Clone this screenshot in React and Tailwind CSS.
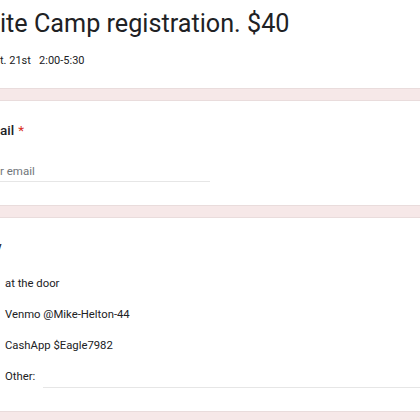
export default function App() {
  const options = ["at the door", "Venmo @Mike-Helton-44", "CashApp $Eagle7982"];
  return (
    <div className="w-[420px] h-[420px] overflow-hidden bg-[#f6e8e8] text-[#202124]" style={{ fontFamily: "Roboto, 'Liberation Sans', sans-serif" }}>
      <div className="h-[89px] bg-white border-b border-[#e9dcdc] pt-[7px]">
        <div className="text-[25.2px] leading-[34px] whitespace-nowrap">ite Camp registration. $40</div>
        <div className="mt-[13px] text-[11px] leading-[14px] whitespace-nowrap">t. 21st&nbsp;&nbsp; 2:00-5:30</div>
      </div>
      <div className="h-[11px]" />
      <div className="h-[106px] bg-white border-y border-[#e9dcdc] pt-[20px]">
        <div className="text-[13.5px] leading-[18px] font-medium flex">
          <span>ail</span>
          <span className="ml-[4px] text-[#d93025] font-normal">*</span>
        </div>
        <div className="mt-[24px] w-[210px] border-b border-[#e6e6e6] pb-[2px] text-[11.5px] leading-[16px] text-[#70757a]">r email</div>
      </div>
      <div className="h-[11px]" />
      <div className="h-[195px] bg-white border-y border-[#e9dcdc] pt-[20px]">
        <div className="text-[14px] leading-[18px] -ml-[5px]">y</div>
        <div className="mt-[20px] flex flex-col gap-[15px] pl-[5px] text-[11.3px] leading-[16px]">
          {options.map((o) => (
            <div key={o} className="h-[16px]">{o}</div>
          ))}
          <div className="flex items-end gap-[8px] h-[16px]">
            <span>Other:</span>
            <div className="flex-1 border-b border-[#e6e6e6] mb-[-3px]" />
          </div>
        </div>
      </div>
    </div>
  );
}
